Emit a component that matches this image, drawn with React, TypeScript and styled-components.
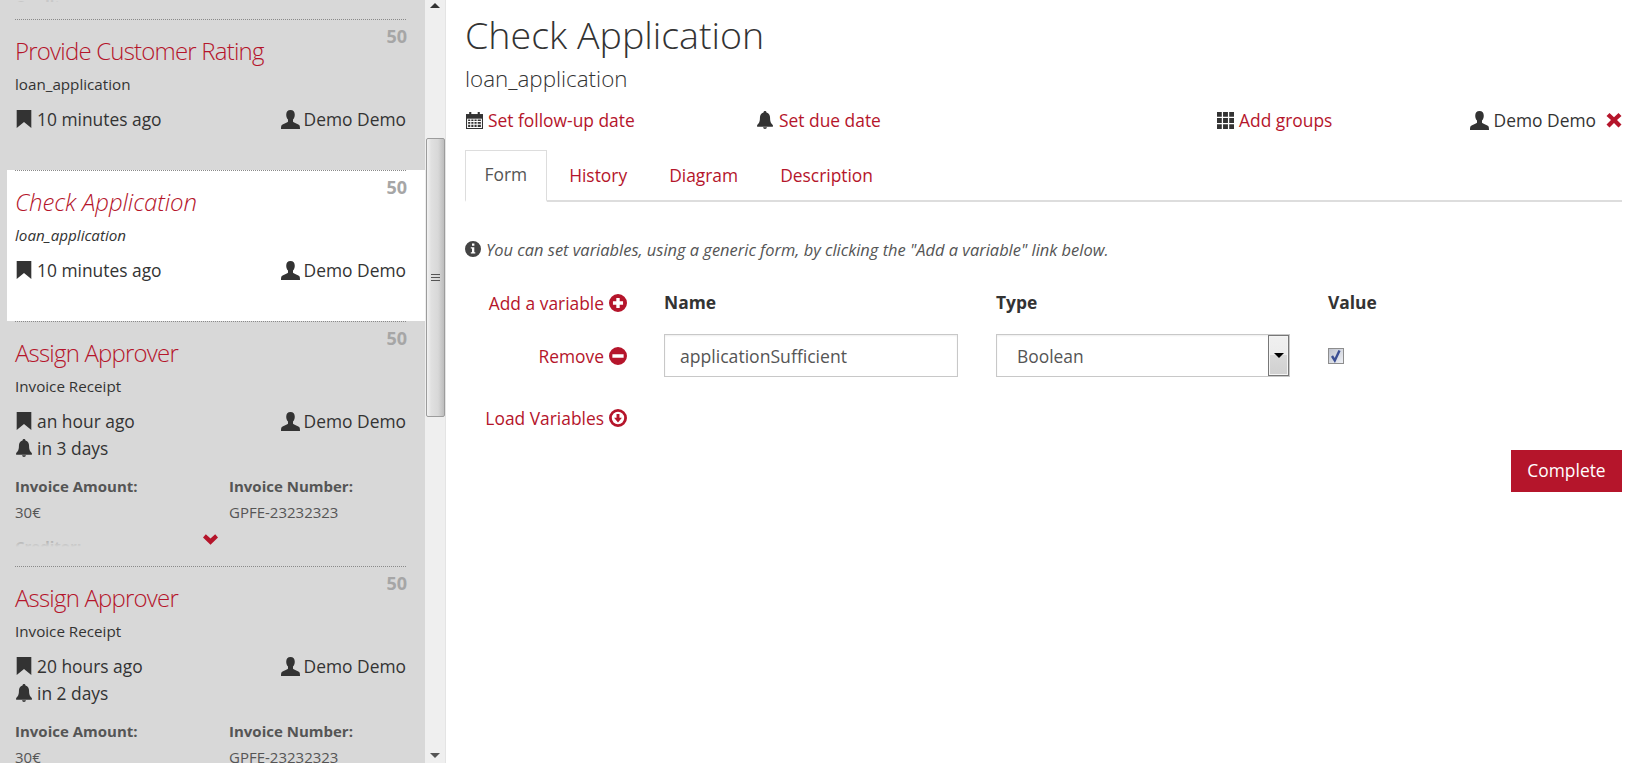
import { ReactNode } from "react";
import styled, { createGlobalStyle } from "styled-components";

const GlobalStyle = createGlobalStyle`
    html, body {
        margin: 0;
        padding: 0;
        height: 100%;
        overflow: hidden;
        background: #fff;
    }
    * {
        box-sizing: border-box;
    }
    body {
        font-family: "Open Sans", "Liberation Sans", sans-serif;
        font-size: 17.4px;
        color: #333;
    }
`;

const RED = "#b5152b";

const Page = styled.div`
    display: flex;
    width: 1632px;
    height: 763px;
    overflow: hidden;
`;

const Sidebar = styled.div`
    width: 425px;
    height: 100%;
    flex-shrink: 0;
    background: #d8d8d8;
    overflow: hidden;
`;

const ScrolledOff = styled.div`
    height: 2px;
    margin: 0 0 17px 15px;
    overflow: hidden;
`;

const ScrolledOffText = styled.div`
    margin-top: -5px;
    font-size: 15px;
    font-weight: 700;
    line-height: 20px;
    color: #c8c8c8;
`;

const Task = styled.div<{ $selected?: boolean; $height: number }>`
    position: relative;
    height: ${(p) => p.$height}px;
    margin-left: 7px;
    padding: 1px 19px 0 8px;
    background: ${(p) => (p.$selected ? "#fff" : "transparent")};
    font-style: ${(p) => (p.$selected ? "italic" : "normal")};

    &::before {
        content: "";
        position: absolute;
        top: 0;
        left: 8px;
        right: 19px;
        border-top: 1px dotted #8a8a8a;
    }
`;

const Priority = styled.div`
    position: absolute;
    top: 3px;
    right: 18px;
    font-size: 18px;
    font-style: normal;
    font-weight: 700;
    line-height: 28px;
    color: #a6a6a6;
`;

const TaskTitle = styled.div<{ $selected?: boolean }>`
    padding-top: 14px;
    font-size: 24px;
    font-weight: 300;
    line-height: 33px;
    letter-spacing: ${(p) => (p.$selected ? "-0.1px" : "-0.8px")};
    color: ${RED};
`;

const TaskProcess = styled.div`
    margin-top: 7px;
    font-size: 15.2px;
    line-height: 20px;
`;

const MetaRow = styled.div<{ $first?: boolean }>`
    display: flex;
    justify-content: space-between;
    align-items: center;
    margin-top: ${(p) => (p.$first ? "12px" : "1px")};
    height: 26px;
    font-style: normal;
`;

const MetaItem = styled.span`
    display: inline-flex;
    align-items: center;
    gap: 4px;
    white-space: nowrap;
`;

const Clip = styled.div`
    position: relative;
    height: 86px;
    overflow: hidden;
`;

const Fields = styled.div`
    display: grid;
    grid-template-columns: 214px 1fr;
    padding-top: 12px;
    font-size: 15px;
    line-height: 26px;
    color: #555;
`;

const FieldLabel = styled.div`
    font-weight: 700;
`;

const FieldValue = styled.div`
    margin-bottom: 8px;
`;

const Fade = styled.div`
    position: absolute;
    left: 0;
    right: 0;
    bottom: 0;
    height: 20px;
    background: linear-gradient(to bottom, rgba(216, 216, 216, 0), #d8d8d8 100%);
`;

const MoreToggle = styled.div`
    position: absolute;
    left: 196px;
    top: 211px;
    display: flex;
    color: ${RED};
`;

const Scrollbar = styled.div`
    width: 21px;
    height: 100%;
    flex-shrink: 0;
    display: flex;
    flex-direction: column;
    align-items: center;
    background: #efefef;
    border-right: 1px solid #e4e4e4;
`;

const ScrollArrow = styled.div<{ $down?: boolean }>`
    height: 19px;
    display: flex;
    justify-content: center;
    align-items: ${(p) => (p.$down ? "flex-start" : "flex-end")};
    padding: ${(p) => (p.$down ? "9px 0 0" : "0 0 11px")};
    flex-shrink: 0;

    &::after {
        content: "";
        border-left: 5px solid transparent;
        border-right: 5px solid transparent;
        ${(p) => (p.$down ? "border-top: 5px solid #555;" : "border-bottom: 5px solid #333;")}
    }
`;

const ScrollSpace = styled.div<{ $size: number; $grow?: boolean }>`
    height: ${(p) => p.$size}px;
    flex-grow: ${(p) => (p.$grow ? 1 : 0)};
`;

const ScrollThumb = styled.div`
    width: 19px;
    height: 279px;
    flex-shrink: 0;
    display: flex;
    flex-direction: column;
    justify-content: center;
    align-items: center;
    gap: 2px;
    border: 1px solid #9c9c9c;
    border-radius: 2px;
    background: linear-gradient(to right, #f2f2f2 0, #e0e0e0 25%, #d8d8d8 65%, #bdbdbd 100%);
`;

const Grip = styled.span`
    display: block;
    width: 9px;
    height: 1px;
    background: #555;
`;

const Main = styled.div`
    flex: 1;
    min-width: 0;
    padding: 0 10px 0 19px;
`;

const Heading = styled.h1`
    margin: 0;
    padding-top: 9px;
    font-size: 37.6px;
    font-weight: 300;
    line-height: 51px;
    color: #333;
`;

const SubHeading = styled.div`
    margin-top: 5px;
    font-size: 22.4px;
    font-weight: 300;
    line-height: 28px;
`;

const Actions = styled.div`
    display: grid;
    grid-template-columns: 290px 461px 248px 1fr;
    align-items: center;
    height: 26px;
    margin-top: 14px;
    padding-left: 1px;
`;

const ActionCell = styled.span<{ $right?: boolean }>`
    display: inline-flex;
    align-items: center;
    gap: 5px;
    justify-content: ${(p) => (p.$right ? "flex-end" : "flex-start")};
    white-space: nowrap;
`;

const ActionLink = styled.a`
    color: ${RED};
`;

const CloseIcon = styled.span`
    display: inline-flex;
    margin-left: 5px;
    color: ${RED};
`;

const Tabs = styled.div`
    display: flex;
    height: 52px;
    margin-top: 17px;
    border-bottom: 2px solid #ddd;
`;

const Tab = styled.div<{ $active?: boolean }>`
    height: 52px;
    padding: 0 18.5px 4px;
    display: flex;
    align-items: center;
    margin-right: 3px;
    color: ${(p) => (p.$active ? "#555" : RED)};
    background: ${(p) => (p.$active ? "#fff" : "transparent")};
    border: 1px solid ${(p) => (p.$active ? "#ddd" : "transparent")};
    border-bottom: ${(p) => (p.$active ? "2px solid #fff" : "0")};
`;

const Hint = styled.div`
    display: flex;
    align-items: center;
    gap: 5px;
    margin-top: 36px;
    height: 22px;
    font-size: 16.45px;
    font-style: italic;
    color: #555;
`;

const VariableGrid = styled.div`
    display: grid;
    grid-template-columns: 161px 294px 294px 1fr;
    column-gap: 38px;
    margin-top: 29px;
`;

const ColumnHead = styled.div`
    height: 26px;
    line-height: 26px;
    font-weight: 700;
    color: #333;
`;

const SideLink = styled.a<{ $tall?: boolean }>`
    display: flex;
    justify-content: flex-end;
    align-items: center;
    gap: 5px;
    height: ${(p) => (p.$tall ? "43px" : "26px")};
    margin-right: -1px;
    padding-top: ${(p) => (p.$tall ? "0" : "2px")};
    color: ${RED};
    white-space: nowrap;
`;

const Spacer = styled.div`
    height: 19px;
    grid-column: 1 / -1;
`;

const TextInput = styled.input`
    width: 100%;
    height: 43px;
    padding: 0 15px;
    border: 1px solid #c8c8c8;
    background: #fff;
    box-shadow: inset 0 1px 2px rgba(0, 0, 0, 0.07);
    font-family: inherit;
    font-size: 17.6px;
    color: #555;
    outline: none;
`;

const SelectBox = styled.div`
    display: flex;
    height: 43px;
    padding-left: 20px;
    align-items: center;
    justify-content: space-between;
    border: 1px solid #c8c8c8;
    box-shadow: inset 0 1px 2px rgba(0, 0, 0, 0.07);
    color: #555;
`;

const SelectArrow = styled.div`
    width: 21px;
    height: 100%;
    display: flex;
    justify-content: center;
    align-items: center;
    border: 1px solid #777;
    box-shadow: inset 0 0 0 1px #f4f4f4;
    background: linear-gradient(to bottom, #f0f0f0 0, #ececec 48%, #d9d9d9 48%, #d0d0d0 100%);

    &::after {
        content: "";
        border-left: 5px solid transparent;
        border-right: 5px solid transparent;
        border-top: 5px solid #000;
    }
`;

const CheckCell = styled.div`
    height: 43px;
    display: flex;
    align-items: center;
`;

const CheckBox = styled.span`
    width: 16px;
    height: 16px;
    display: flex;
    justify-content: center;
    align-items: center;
    border: 1px solid #8d8d8d;
    background: linear-gradient(135deg, #bfc3ce 0, #eef0f5 100%);
`;

const LoadRow = styled.div`
    grid-column: 1;
    margin-top: 27px;
`;

const Footer = styled.div`
    display: flex;
    justify-content: flex-end;
    margin-top: 20px;
`;

const CompleteButton = styled.button`
    width: 111px;
    height: 42px;
    padding: 0 0 2px;
    border: 0;
    background: ${RED};
    color: #fff;
    font-family: inherit;
    font-size: 17.4px;
`;

const Svg = styled.svg`
    display: block;
    flex-shrink: 0;
`;

function Glyph({ size = 16, color = "#333", children }: { size?: number; color?: string; children: ReactNode }) {
    return (
        <Svg width={size} height={size} viewBox="0 0 16 16" fill={color}>
            {children}
        </Svg>
    );
}

const BookmarkIcon = () => (
    <Glyph size={18}>
        <path d="M1.500 0h13v16L8 10.600 1.500 16z" />
    </Glyph>
);

const UserIcon = () => (
    <Glyph size={19}>
        <path d="M8 0c2.400 0 3.600 1.700 3.600 3.900 0 1.600-.6 3.300-1.500 4.200v1.500c0 .8 4.400 2 5.400 3.300.4.600.5 1.700.5 3.100H0c0-1.400.1-2.500.5-3.100 1-1.300 5.400-2.500 5.400-3.300V8.100C5 7.200 4.400 5.500 4.400 3.900 4.400 1.700 5.600 0 8 0z" />
    </Glyph>
);

const BellIcon = () => (
    <Glyph size={18}>
        <path d="M8 0c.8 0 1.300.5 1.300 1.300 2.300.6 3.200 2.500 3.200 4.700 0 4 1 5 2.500 6.500V14H1v-1.500C2.500 11 3.500 10 3.500 6c0-2.200.9-4.100 3.200-4.700C6.700.5 7.200 0 8 0zM6.300 14.500h3.400C9.600 15.400 8.900 16 8 16s-1.600-.6-1.700-1.500z" />
    </Glyph>
);

const CalendarIcon = () => (
    <Glyph size={17}>
        <path
            fillRule="evenodd"
            d="M3 0h2v2h6V0h2v2h3v14H0V2h3zM1 6v9h14V6zM2 7h2v1.500H2zM5 7h2v1.500H5zM8 7h2v1.500H8zM11 7h3v1.500h-3zM2 9.500h2V11H2zM5 9.500h2V11H5zM8 9.500h2V11H8zM11 9.500h3V11h-3zM2 12h2v2H2zM5 12h2v2H5zM8 12h2v2H8zM11 12h3v2h-3z"
        />
        <path d="M0 2h16v4H0z" />
    </Glyph>
);

const GridIcon = () => (
    <Glyph size={17}>
        <path d="M0 0h4.500v4.500H0zM5.700 0h4.600v4.500H5.700zM11.500 0H16v4.500h-4.500zM0 5.700h4.500v4.600H0zM5.700 5.700h4.600v4.600H5.700zM11.500 5.700H16v4.600h-4.500zM0 11.500h4.500V16H0zM5.700 11.500h4.600V16H5.700zM11.500 11.500H16V16h-4.500z" />
    </Glyph>
);

const RemoveIcon = () => (
    <Glyph size={16} color={RED}>
        <path d="M3.500 1L8 5.300 12.500 1 15.500 4 11 8l4.500 4.500-3 3L8 11l-4.500 4.500-3-3L5 8 .5 4z" />
    </Glyph>
);

const PlusIcon = () => (
    <Glyph size={18} color={RED}>
        <path
            fillRule="evenodd"
            d="M8 0a8 8 0 1 1 0 16A8 8 0 0 1 8 0zM6.500 3.500v3h-3v3h3v3h3v-3h3v-3h-3v-3z"
        />
    </Glyph>
);

const MinusIcon = () => (
    <Glyph size={18} color={RED}>
        <path fillRule="evenodd" d="M8 0a8 8 0 1 1 0 16A8 8 0 0 1 8 0zM3 6.500v3h10v-3z" />
    </Glyph>
);

const LoadIcon = () => (
    <Glyph size={18} color={RED}>
        <path
            fillRule="evenodd"
            d="M8 0a8 8 0 1 1 0 16A8 8 0 0 1 8 0zm0 2.500a5.500 5.500 0 1 0 0 11 5.500 5.500 0 0 0 0-11zM6.700 4.500h2.600v3.200H11.500L8 12 4.500 7.700h2.200z"
        />
    </Glyph>
);

const InfoIcon = () => (
    <Glyph size={16} color="#444">
        <path
            fillRule="evenodd"
            d="M8 0a8 8 0 1 1 0 16A8 8 0 0 1 8 0zM7 2.500v2.300h2.400V2.500zM5.800 6.200v1.300H7v3.800H5.800v1.300h4.500v-1.300H9.300V6.200z"
        />
    </Glyph>
);

const ChevronIcon = () => (
    <Glyph size={15} color={RED}>
        <path d="M3 2.500l5 4.500 5-4.500L16 5.800 8 13.500 0 5.800z" />
    </Glyph>
);

const CheckMark = () => (
    <Svg width={14} height={14} viewBox="0 0 14 14" fill="none">
        <path d="M3 7l2.800 4.500L10.500 1.500" stroke="#3b4f94" strokeWidth={2.400} />
    </Svg>
);

type TaskData = {
    title: string;
    process: string;
    created: string;
    due?: string;
    height: number;
    selected?: boolean;
};

const tasks: TaskData[] = [
    { title: "Provide Customer Rating", process: "loan_application", created: "10 minutes ago", height: 151 },
    { title: "Check Application", process: "loan_application", created: "10 minutes ago", height: 151, selected: true },
    { title: "Assign Approver", process: "Invoice Receipt", created: "an hour ago", due: "in 3 days", height: 245 },
    { title: "Assign Approver", process: "Invoice Receipt", created: "20 hours ago", due: "in 2 days", height: 245 },
];

function TaskCard({ task }: { task: TaskData }) {
    return (
        <Task $selected={task.selected} $height={task.height}>
            <Priority>50</Priority>
            <TaskTitle $selected={task.selected}>{task.title}</TaskTitle>
            <TaskProcess>{task.process}</TaskProcess>
            <MetaRow $first>
                <MetaItem>
                    <BookmarkIcon />
                    {task.created}
                </MetaItem>
                <MetaItem>
                    <UserIcon />
                    Demo Demo
                </MetaItem>
            </MetaRow>
            {task.due && (
                <>
                    <MetaRow>
                        <MetaItem>
                            <BellIcon />
                            {task.due}
                        </MetaItem>
                    </MetaRow>
                    <Clip>
                        <Fields>
                            <FieldLabel>Invoice Amount:</FieldLabel>
                            <FieldLabel>Invoice Number:</FieldLabel>
                            <FieldValue>30€</FieldValue>
                            <FieldValue>GPFE-23232323</FieldValue>
                            <FieldLabel>Creditor:</FieldLabel>
                        </Fields>
                        <Fade />
                    </Clip>
                    <MoreToggle>
                        <ChevronIcon />
                    </MoreToggle>
                </>
            )}
        </Task>
    );
}

export default function App() {
    return (
        <>
            <GlobalStyle />
            <Page>
                <Sidebar>
                    <ScrolledOff>
                        <ScrolledOffText>Creditor:</ScrolledOffText>
                    </ScrolledOff>
                    {tasks.map((task, index) => (
                        <TaskCard key={index} task={task} />
                    ))}
                </Sidebar>
                <Scrollbar>
                    <ScrollArrow />
                    <ScrollSpace $size={119} />
                    <ScrollThumb>
                        <Grip />
                        <Grip />
                        <Grip />
                    </ScrollThumb>
                    <ScrollSpace $size={0} $grow />
                    <ScrollArrow $down />
                </Scrollbar>
                <Main>
                    <Heading>Check Application</Heading>
                    <SubHeading>loan_application</SubHeading>
                    <Actions>
                        <ActionCell>
                            <CalendarIcon />
                            <ActionLink>Set follow-up date</ActionLink>
                        </ActionCell>
                        <ActionCell>
                            <BellIcon />
                            <ActionLink>Set due date</ActionLink>
                        </ActionCell>
                        <ActionCell>
                            <GridIcon />
                            <ActionLink>Add groups</ActionLink>
                        </ActionCell>
                        <ActionCell $right>
                            <UserIcon />
                            Demo Demo
                            <CloseIcon>
                                <RemoveIcon />
                            </CloseIcon>
                        </ActionCell>
                    </Actions>
                    <Tabs>
                        <Tab $active>Form</Tab>
                        <Tab>History</Tab>
                        <Tab>Diagram</Tab>
                        <Tab>Description</Tab>
                    </Tabs>
                    <Hint>
                        <InfoIcon />
                        You can set variables, using a generic form, by clicking the "Add a variable" link below.
                    </Hint>
                    <VariableGrid>
                        <SideLink>
                            Add a variable
                            <PlusIcon />
                        </SideLink>
                        <ColumnHead>Name</ColumnHead>
                        <ColumnHead>Type</ColumnHead>
                        <ColumnHead>Value</ColumnHead>
                        <Spacer />
                        <SideLink $tall>
                            Remove
                            <MinusIcon />
                        </SideLink>
                        <TextInput defaultValue="applicationSufficient" />
                        <SelectBox>
                            Boolean
                            <SelectArrow />
                        </SelectBox>
                        <CheckCell>
                            <CheckBox>
                                <CheckMark />
                            </CheckBox>
                        </CheckCell>
                        <LoadRow>
                            <SideLink>
                                Load Variables
                                <LoadIcon />
                            </SideLink>
                        </LoadRow>
                    </VariableGrid>
                    <Footer>
                        <CompleteButton>Complete</CompleteButton>
                    </Footer>
                </Main>
            </Page>
        </>
    );
}
